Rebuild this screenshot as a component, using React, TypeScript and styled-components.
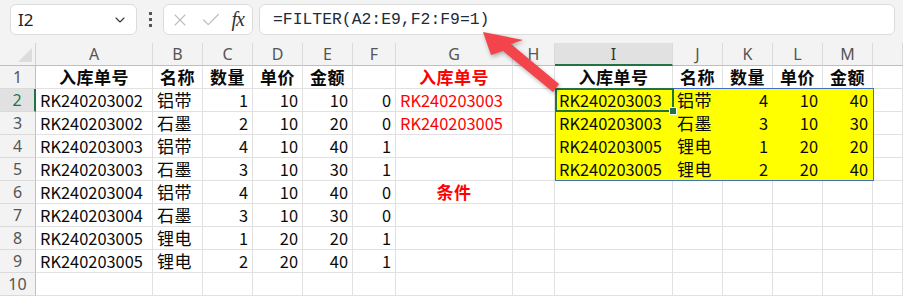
import React from "react";
import styled, { createGlobalStyle } from "styled-components";
import { ChevronDown, X, Check } from "lucide-react";

type CellDef = {
  t?: string | number;
  num?: boolean;
  bold?: boolean;
  red?: boolean;
  fill?: boolean;
  center?: boolean;
};

const COLS = ["A", "B", "C", "D", "E", "F", "G", "H", "I", "J", "K", "L", "M", ""];
const HEAD = ["入库单号", "名称", "数量", "单价", "金额"];

const source: (string | number)[][] = [
  ["RK240203002", "铝带", 1, 10, 10, 0],
  ["RK240203002", "石墨", 2, 10, 20, 0],
  ["RK240203003", "铝带", 4, 10, 40, 1],
  ["RK240203003", "石墨", 3, 10, 30, 1],
  ["RK240203004", "铝带", 4, 10, 40, 0],
  ["RK240203004", "石墨", 3, 10, 30, 0],
  ["RK240203005", "锂电", 1, 20, 20, 1],
  ["RK240203005", "锂电", 2, 20, 40, 1],
];

const result: (string | number)[][] = [
  ["RK240203003", "铝带", 4, 10, 40],
  ["RK240203003", "石墨", 3, 10, 30],
  ["RK240203005", "锂电", 1, 20, 20],
  ["RK240203005", "锂电", 2, 20, 40],
];

const isCjk = (v?: string | number) => typeof v === "string" && /[\u4e00-\u9fff]/.test(v);

const toCell = (v: string | number | undefined, extra: Partial<CellDef> = {}): CellDef =>
  v === undefined ? {} : { t: v, num: typeof v === "number", ...extra };

const buildRow = (r: number): CellDef[] => {
  const row: CellDef[] = [];
  // A-F
  for (let c = 0; c < 6; c++) {
    if (r === 1) row.push(c < 5 ? { t: HEAD[c], bold: true, center: true } : {});
    else if (r <= 9) row.push(toCell(source[r - 2][c]));
    else row.push({});
  }
  // G
  if (r === 1) row.push({ t: "入库单号", bold: true, red: true, center: true });
  else if (r === 2) row.push({ t: "RK240203003", red: true });
  else if (r === 3) row.push({ t: "RK240203005", red: true });
  else if (r === 6) row.push({ t: "条件", bold: true, red: true, center: true });
  else row.push({});
  // H
  row.push({});
  // I-M
  for (let c = 0; c < 5; c++) {
    if (r === 1) row.push({ t: HEAD[c], bold: true, center: true });
    else if (r >= 2 && r <= 5) row.push(toCell(result[r - 2][c], { fill: true }));
    else row.push({});
  }
  // N
  row.push({});
  return row;
};

const GlobalStyle = createGlobalStyle`
  html, body {
    margin: 0;
    padding: 0;
    background: #ffffff;
    overflow: hidden;
  }
  body {
    font-family: "Noto Sans CJK SC", "Noto Sans", sans-serif;
  }
`;

const Page = styled.div`
  position: relative;
  width: 903px;
  height: 297px;
  overflow: hidden;
  background: #ffffff;
`;

const Toolbar = styled.div`
  display: flex;
  align-items: center;
  height: 43px;
  box-sizing: border-box;
  padding: 0 0 4px 10px;
  background: #f3f3f3;
`;

const Field = styled.div`
  display: flex;
  align-items: center;
  height: 31px;
  box-sizing: border-box;
  background: #ffffff;
  border: 1px solid #dcdcdc;
  border-radius: 6px;
`;

const NameBox = styled(Field)`
  width: 127px;
  padding: 0 8px 0 7px;
  justify-content: space-between;
  font-family: "Noto Sans", sans-serif;
  font-size: 17px;
  color: #222;
`;

const DotsSlot = styled.div`
  width: 26px;
  display: flex;
  flex-direction: column;
  align-items: center;
  gap: 3px;
`;

const Dot = styled.span`
  width: 3px;
  height: 3px;
  background: #555;
`;

const IconBox = styled(Field)`
  width: 90px;
  padding: 0 6px 0 6px;
  justify-content: space-between;
  color: #bdbdbd;
`;

const Fx = styled.span`
  font-family: "Liberation Serif", serif;
  font-style: italic;
  font-size: 20px;
  color: #333;
  letter-spacing: -1px;
  margin-right: 2px;
`;

const FormulaBox = styled(Field)`
  margin-left: 6px;
  width: 636px;
  padding-left: 13px;
  font-family: "Liberation Mono", monospace;
  font-size: 16.4px;
  color: #1e2b3a;
`;

const Sheet = styled.div`
  position: relative;
  display: grid;
  grid-template-columns: 36px 117px 50px 50px 50px 50px 43px 117px 42px 118px 50px 50px 50px 50px 1fr;
  grid-auto-rows: 23px;
`;

const Corner = styled.div`
  position: relative;
  background: #f3f3f3;
  border-right: 1px solid #d0d0d0;
  border-bottom: 1px solid #bfbfbf;
  box-sizing: border-box;
  &::after {
    content: "";
    position: absolute;
    right: 3px;
    bottom: 3px;
    border-style: solid;
    border-width: 0 0 14px 14px;
    border-color: transparent transparent #dcdcdc transparent;
  }
`;

const ColHead = styled.div<{ $active?: boolean }>`
  display: flex;
  align-items: center;
  justify-content: center;
  box-sizing: border-box;
  background: ${(p) => (p.$active ? "#e1e1e1" : "#f3f3f3")};
  border-right: 1px solid #dadada;
  border-bottom: ${(p) => (p.$active ? "2px solid #217346" : "1px solid #bfbfbf")};
  font-family: "Noto Sans", sans-serif;
  font-size: 16px;
  color: ${(p) => (p.$active ? "#333" : "#555")};
  line-height: 22px;
`;

const RowHead = styled.div<{ $active?: boolean }>`
  display: flex;
  align-items: center;
  justify-content: center;
  box-sizing: border-box;
  background: ${(p) => (p.$active ? "#e1e1e1" : "#f3f3f3")};
  border-right: ${(p) => (p.$active ? "2px solid #217346" : "1px solid #bfbfbf")};
  border-bottom: 1px solid #dadada;
  font-family: "Noto Sans", sans-serif;
  font-size: 16px;
  color: ${(p) => (p.$active ? "#217346" : "#555")};
`;

const Cell = styled.div<{
  $num?: boolean;
  $bold?: boolean;
  $red?: boolean;
  $fill?: boolean;
  $center?: boolean;
  $cjk?: boolean;
}>`
  display: flex;
  align-items: center;
  justify-content: ${(p) => (p.$center ? "center" : p.$num ? "flex-end" : "flex-start")};
  box-sizing: border-box;
  padding: 0 4px 0 4px;
  white-space: nowrap;
  overflow: visible;
  background: ${(p) => (p.$fill ? "#ffff00" : "#ffffff")};
  border-right: 1px solid ${(p) => (p.$fill ? "#ffff00" : "#e1e1e1")};
  border-bottom: 1px solid ${(p) => (p.$fill ? "#ffff00" : "#e1e1e1")};
  font-size: ${(p) => (p.$cjk ? "17px" : "16.4px")};
  letter-spacing: ${(p) => (p.$cjk ? "0.5px" : "0")};
  line-height: 22px;
  font-weight: ${(p) => (p.$bold ? 700 : 400)};
  color: ${(p) => (p.$red ? "#ff0000" : "#0a0a0a")};
`;

const SpillFrame = styled.div`
  position: absolute;
  left: 555px;
  top: 45px;
  width: 319px;
  height: 93px;
  box-sizing: border-box;
  border: 1px solid #3f6fc6;
  pointer-events: none;
`;

const Selection = styled.div`
  position: absolute;
  left: 555px;
  top: 45px;
  width: 119px;
  height: 24px;
  box-sizing: border-box;
  border: 2px solid #217346;
  pointer-events: none;
  &::after {
    content: "";
    position: absolute;
    right: -5px;
    bottom: -5px;
    width: 6px;
    height: 6px;
    background: #217346;
    border: 1px solid #ffffff;
  }
`;

const Overlay = styled.svg`
  position: absolute;
  left: 0;
  top: 0;
  pointer-events: none;
  filter: drop-shadow(1px 2px 2px rgba(0, 0, 0, 0.3));
`;

const Arrow = () => (
  <Overlay width="903" height="297" viewBox="0 0 903 297">
    <polygon
      fill="#f2444a"
      points="483,32 491,55 503,51 553,92 559,84 511,44 523,40"
    />
  </Overlay>
);

export default function App() {
  const rows = Array.from({ length: 10 }, (_, i) => i + 1);
  return (
    <Page>
      <GlobalStyle />
      <Toolbar>
        <NameBox>
          <span>I2</span>
          <ChevronDown size={16} strokeWidth={1.6} color="#333" />
        </NameBox>
        <DotsSlot>
          <Dot />
          <Dot />
          <Dot />
        </DotsSlot>
        <IconBox>
          <X size={20} strokeWidth={1.3} />
          <Check size={22} strokeWidth={1.3} />
          <Fx>fx</Fx>
        </IconBox>
        <FormulaBox>=FILTER(A2:E9,F2:F9=1)</FormulaBox>
      </Toolbar>
      <Sheet>
        <Corner />
        {COLS.map((c, i) => (
          <ColHead key={i} $active={c === "I"}>
            {c}
          </ColHead>
        ))}
        {rows.map((r) => (
          <React.Fragment key={r}>
            <RowHead $active={r === 2}>{r}</RowHead>
            {buildRow(r).map((cell, i) => (
              <Cell
                key={i}
                $num={cell.num}
                $bold={cell.bold}
                $red={cell.red}
                $fill={cell.fill}
                $center={cell.center}
                $cjk={isCjk(cell.t)}
              >
                {cell.t}
              </Cell>
            ))}
          </React.Fragment>
        ))}
        <SpillFrame />
        <Selection />
      </Sheet>
      <Arrow />
    </Page>
  );
}
